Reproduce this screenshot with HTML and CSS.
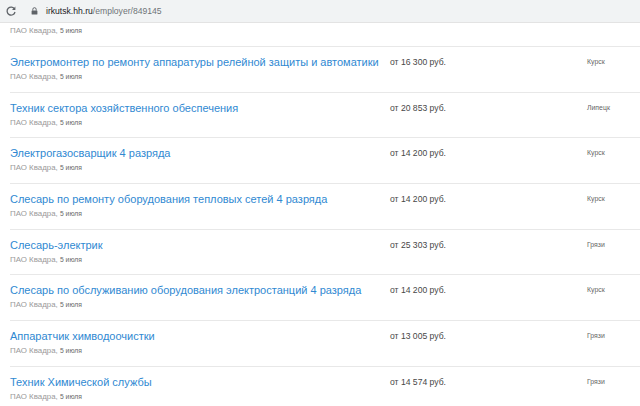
FILE: index.html
```
<!DOCTYPE html>
<html lang="ru">
<head>
<meta charset="utf-8">
<link rel="stylesheet" href="styles.css">
</head>
<body>
<div class="toolbar">
  <svg class="reload" width="12" height="12" viewBox="0 0 12 12"><path d="M9.6 4.2A4 4 0 1 0 10 7" fill="none" stroke="#5f6368" stroke-width="1.3"/><path d="M10.4 1.6V5H7z" fill="#5f6368"/></svg>
  <div class="omnibox">
    <svg class="lock" width="7" height="8" viewBox="0 0 7 8"><path d="M1.8 3.6V2.4a1.7 1.7 0 0 1 3.4 0v1.2" fill="none" stroke="#5f6368" stroke-width="1"/><rect x="0.6" y="3.4" width="5.8" height="4.2" rx="0.6" fill="#5f6368"/></svg>
    <span class="host">irkutsk.hh.ru</span><span class="path">/employer/849145</span>
  </div>
</div>
<div class="list">
  <div class="row first">
    <div class="main"><div class="meta">ПАО Квадра, <span class="date">5 июля</span></div></div>
  </div>
  <div class="row">
    <div class="main"><a class="title">Электромонтер по ремонту аппаратуры релейной защиты и автоматики</a><div class="meta">ПАО Квадра, <span class="date">5 июля</span></div></div>
    <div class="salary">от 16 300 руб.</div>
    <div class="city">Курск</div>
  </div>
  <div class="row">
    <div class="main"><a class="title">Техник сектора хозяйственного обеспечения</a><div class="meta">ПАО Квадра, <span class="date">5 июля</span></div></div>
    <div class="salary">от 20 853 руб.</div>
    <div class="city">Липецк</div>
  </div>
  <div class="row">
    <div class="main"><a class="title">Электрогазосварщик 4 разряда</a><div class="meta">ПАО Квадра, <span class="date">5 июля</span></div></div>
    <div class="salary">от 14 200 руб.</div>
    <div class="city">Курск</div>
  </div>
  <div class="row">
    <div class="main"><a class="title">Слесарь по ремонту оборудования тепловых сетей 4 разряда</a><div class="meta">ПАО Квадра, <span class="date">5 июля</span></div></div>
    <div class="salary">от 14 200 руб.</div>
    <div class="city">Курск</div>
  </div>
  <div class="row">
    <div class="main"><a class="title">Слесарь-электрик</a><div class="meta">ПАО Квадра, <span class="date">5 июля</span></div></div>
    <div class="salary">от 25 303 руб.</div>
    <div class="city">Грязи</div>
  </div>
  <div class="row">
    <div class="main"><a class="title">Слесарь по обслуживанию оборудования электростанций 4 разряда</a><div class="meta">ПАО Квадра, <span class="date">5 июля</span></div></div>
    <div class="salary">от 14 200 руб.</div>
    <div class="city">Курск</div>
  </div>
  <div class="row">
    <div class="main"><a class="title">Аппаратчик химводоочистки</a><div class="meta">ПАО Квадра, <span class="date">5 июля</span></div></div>
    <div class="salary">от 13 005 руб.</div>
    <div class="city">Грязи</div>
  </div>
  <div class="row">
    <div class="main"><a class="title">Техник Химической службы</a><div class="meta">ПАО Квадра, <span class="date">5 июля</span></div></div>
    <div class="salary">от 14 574 руб.</div>
    <div class="city">Грязи</div>
  </div>
</div>
</body>
</html>
```
FILE: styles.css
```
html, body {
  margin: 0;
  padding: 0;
  background: #fff;
  height: 406px;
  overflow: hidden;
  font-family: "Liberation Sans", Arial, sans-serif;
}
.toolbar {
  height: 22px;
  background: #f1f3f4;
  border-bottom: 1px solid #e3e3e3;
  display: flex;
  align-items: center;
  padding-left: 5px;
  box-sizing: content-box;
}
.reload {
  display: block;
  margin-right: 14px;
}
.omnibox {
  display: flex;
  align-items: center;
  font-size: 8.6px;
}
.lock {
  display: block;
  margin-right: 8px;
}
.host { color: #202124; }
.path { color: #6f7378; }
.list {
  padding-left: 10px;
}
.row {
  display: grid;
  grid-template-columns: 380px 197px 1fr;
  align-items: start;
  height: 45.7px;
  box-sizing: border-box;
  border-top: 1px solid #e8e8e8;
  padding-top: 7px;
}
.row.first {
  border-top: none;
  height: 23px;
  padding-top: 1px;
}
.title {
  display: block;
  font-size: 11px;
  line-height: 16px;
  color: #3089d2;
}
.meta {
  font-size: 7.9px;
  line-height: 13px;
  color: #9a9a9a;
}
.date {
  font-size: 6.8px;
  color: #6a6a6a;
}
.salary {
  font-size: 8.6px;
  line-height: 16px;
  color: #474747;
}
.city {
  font-size: 6.9px;
  line-height: 15px;
  color: #666;
}
```
